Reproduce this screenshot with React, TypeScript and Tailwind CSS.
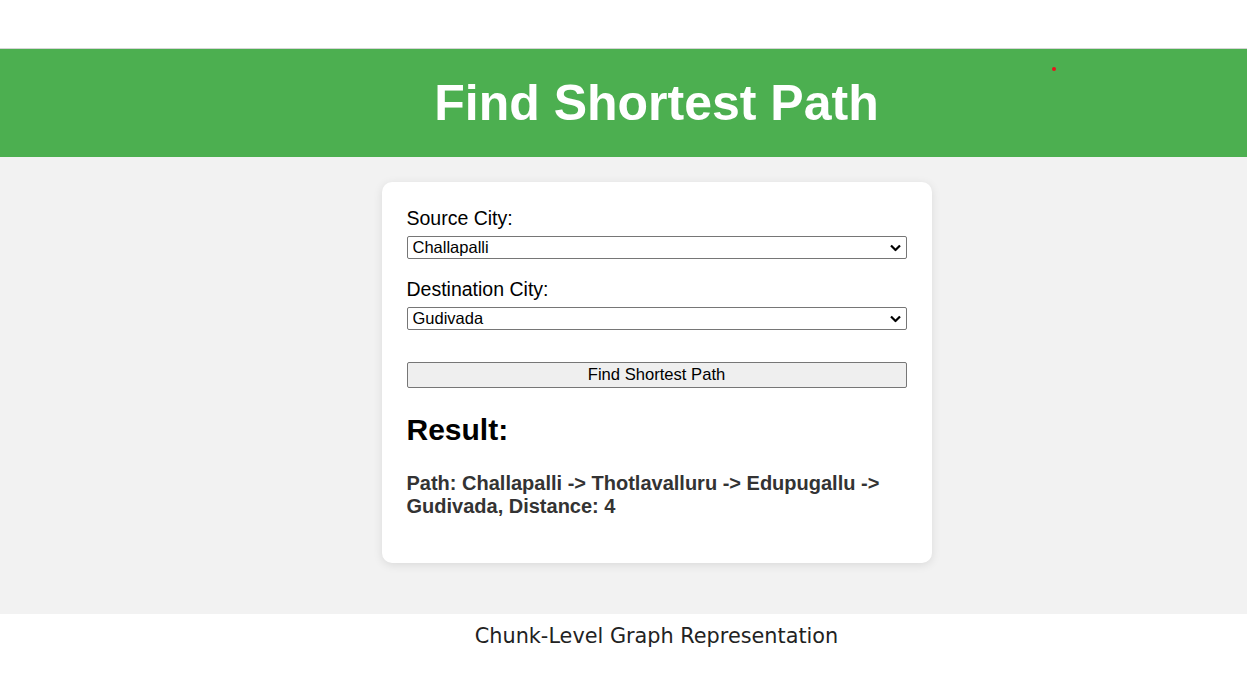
import { useState } from "react";

const CITIES = ["Challapalli", "Thotlavalluru", "Edupugallu", "Gudivada", "Machilipatnam", "Pamarru"];

function Chevron() {
  return (
    <svg
      className="pointer-events-none absolute right-[6px] top-1/2 -translate-y-1/2"
      width="11"
      height="7"
      viewBox="0 0 11 7"
      fill="none"
    >
      <path d="M1 1l4.5 4.5L10 1" stroke="#000" strokeWidth="2.2" />
    </svg>
  );
}

function CitySelect({ value, onChange }: { value: string; onChange: (v: string) => void }) {
  return (
    <div className="relative mt-[6px] w-full">
      <select
        value={value}
        onChange={(e) => onChange(e.target.value)}
        className="block h-[23px] w-full appearance-none rounded-[2px] border border-[#767676] bg-white pl-[5px] text-[16.5px] leading-[21px] text-black"
      >
        {CITIES.map((c) => (
          <option key={c}>{c}</option>
        ))}
      </select>
      <Chevron />
    </div>
  );
}

export default function App() {
  const [source, setSource] = useState("Challapalli");
  const [dest, setDest] = useState("Gudivada");

  return (
    <div className="min-h-screen bg-white font-['Liberation_Sans',Arial,sans-serif]">
      <div className="h-[48px]" />
      <header className="relative flex h-[109px] items-center border-t border-[#d4d4d4] bg-[#4caf50] pl-[66px]">
        <h1 className="flex-1 text-center text-[50px] font-bold leading-none text-white">Find Shortest Path</h1>
        <span className="absolute left-[1052px] top-[18px] h-[4px] w-[4px] rounded-full bg-[#e8141c]" />
      </header>

      <main className="bg-[#f2f2f2] pl-[66px] pt-[25px] pb-[51px]">
        <div className="mx-auto w-[550px] rounded-[10px] bg-white px-[25px] pt-[25px] pb-[45px] shadow-[0_2px_10px_rgba(0,0,0,0.1)]">
          <label className="block text-[19.5px] leading-[23px] text-black">Source City:</label>
          <CitySelect value={source} onChange={setSource} />

          <label className="mt-[19px] block text-[19.5px] leading-[23px] text-black">Destination City:</label>
          <CitySelect value={dest} onChange={setDest} />

          <button className="mt-[32px] block h-[26px] w-full rounded-[2px] border border-[#767676] bg-[#efefef] text-[16.6px] leading-[24px] text-black">
            Find Shortest Path
          </button>

          <h2 className="mt-[25px] text-[30px] font-bold leading-[34px] text-black">Result:</h2>
          <p className="mt-[25px] text-[20px] font-bold leading-[23px] text-[#333]">
            Path: Challapalli -&gt; Thotlavalluru -&gt; Edupugallu -&gt; Gudivada, Distance: 4
          </p>
        </div>
      </main>

      <p className="pl-[66px] pt-[10px] text-center font-['DejaVu_Sans',sans-serif] text-[20.8px] leading-[24px] text-[#222]">
        Chunk-Level Graph Representation
      </p>
    </div>
  );
}
